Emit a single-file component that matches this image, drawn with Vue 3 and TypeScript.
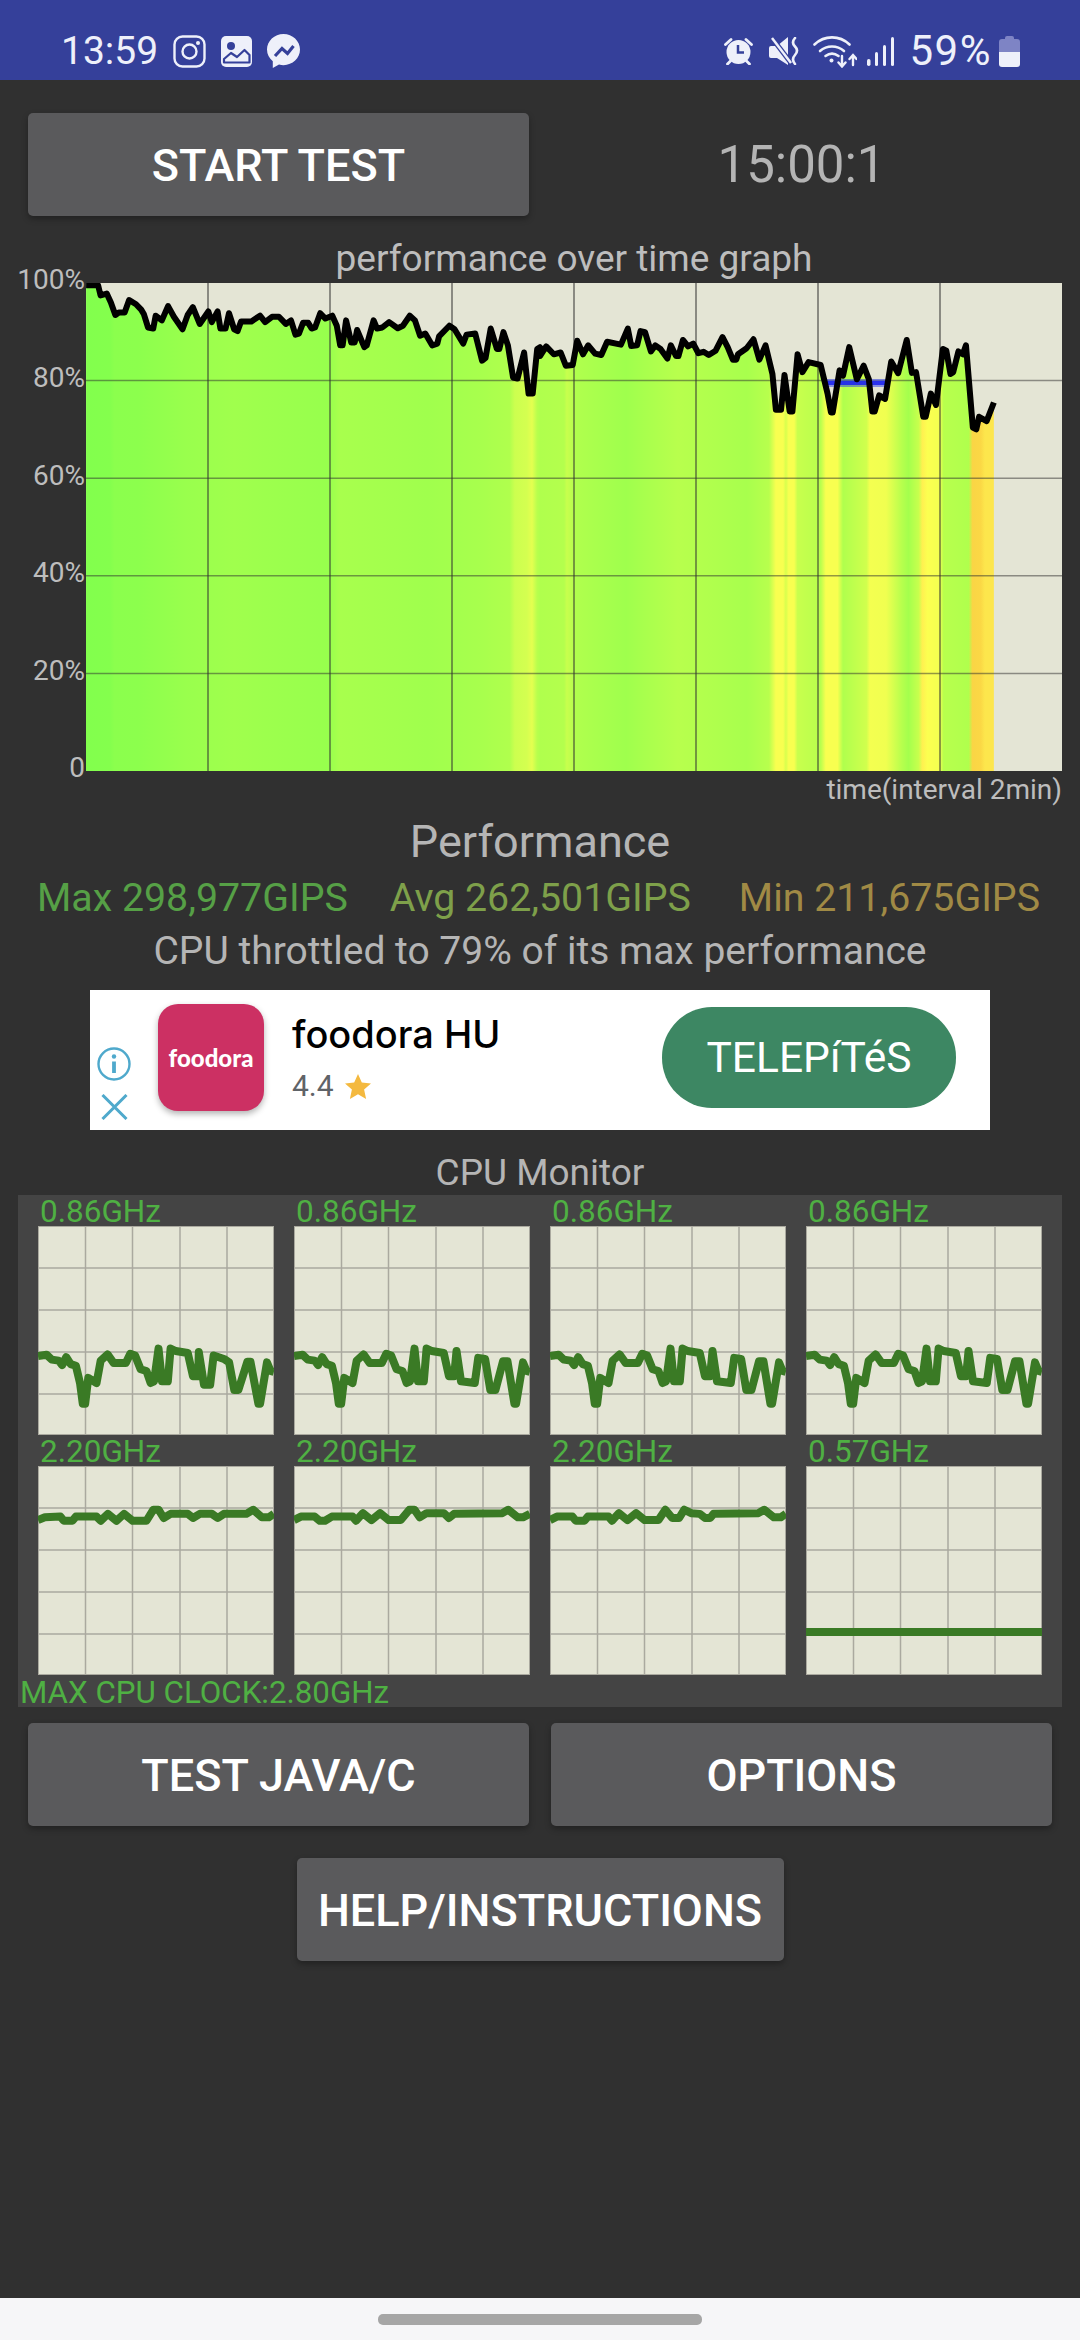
<script setup lang="ts">
type Pt = [number, number]

// trace points were read off the reference, scale them back to plot pixels
const leftX = (x: number) => x / 2.904 - 86
const rightX = (x: number) => x / 2.904 + 454
const chartY = (y: number) => y / 2.8 - 43

const traceLeft: Pt[] = [
  [250, 127], [285, 127], [292, 155], [310, 150], [322, 175], [335, 210], [345, 203], [362, 203], [375, 168], [395, 180],
  [410, 195], [418, 208], [430, 245], [445, 248], [452, 212], [470, 225], [488, 185], [505, 215], [530, 250], [545, 210],
  [560, 188], [580, 235], [605, 200], [615, 230], [632, 200], [640, 248], [655, 248], [665, 205], [680, 250], [690, 255],
  [700, 228], [730, 228], [755, 212], [770, 230], [790, 215], [810, 215], [830, 235], [845, 225], [858, 265], [868, 262],
  [880, 232], [895, 232], [905, 248], [915, 245], [930, 205], [945, 220], [965, 212], [978, 240], [988, 295], [995, 295],
  [1005, 225], [1020, 287], [1030, 287], [1037, 252], [1058, 300], [1065, 295], [1085, 225], [1095, 248], [1110, 245], [1130, 230],
  [1155, 247], [1170, 240], [1190, 212], [1205, 225], [1220, 268], [1235, 262], [1255, 295], [1270, 290], [1275, 270], [1305, 240],
  [1320, 250], [1345, 290], [1355, 265], [1380, 262], [1400, 338], [1410, 330], [1425, 248], [1443, 305], [1450, 305], [1462, 258],
  [1475, 295], [1490, 385], [1503, 388], [1522, 315], [1535, 430], [1547, 430], [1560, 305], [1568, 300]
]
const traceRight: Pt[] = [
  [0, 325], [18, 298], [40, 320], [60, 315], [75, 352], [95, 350], [108, 282], [125, 320], [140, 295], [160, 318],
  [178, 322], [195, 285], [235, 293], [255, 248], [265, 297], [282, 295], [292, 255], [305, 258], [322, 312], [335, 295],
  [350, 305], [370, 332], [380, 295], [395, 325], [402, 325], [415, 280], [430, 298], [445, 290], [460, 317], [475, 313],
  [490, 322], [510, 310], [530, 272], [545, 300], [560, 335], [570, 335], [575, 320], [600, 303], [620, 278], [637, 335],
  [655, 295], [675, 375], [685, 475], [700, 475], [710, 378], [725, 480], [733, 480], [748, 320], [762, 370], [780, 342],
  [815, 350], [835, 430], [845, 483], [850, 483], [870, 365], [880, 380], [898, 300], [920, 390], [940, 352], [955, 390],
  [965, 480], [972, 480], [985, 435], [1002, 445], [1020, 340], [1040, 373], [1065, 280], [1080, 372], [1092, 370], [1113, 495],
  [1120, 495], [1135, 430], [1150, 462], [1170, 305], [1180, 310], [1192, 375], [1200, 370], [1215, 312], [1228, 320], [1237, 295],
  [1257, 525], [1267, 530], [1275, 495], [1297, 507], [1318, 455]
]

const trace: Pt[] = [
  ...traceLeft.map(([x, y]): Pt => [leftX(x), chartY(y)]),
  ...traceRight.map(([x, y]): Pt => [rightX(x), chartY(y)])
]
const tracePoints = trace.map(p => p.join(',')).join(' ')
const lastX = trace[trace.length - 1][0]
const areaPoints = `${tracePoints} ${lastX},488 0,488`

const heatLeft: [number, string][] = [
  [250, '#82ff4d'], [320, '#84ff4d'], [332, '#8bff4d'], [400, '#8cff4d'], [540, '#99ff4d'], [600, '#9cff4d'], [680, '#a0ff4d'],
  [955, '#97ff4d'], [985, '#a8ff4d'], [1240, '#a0ff4d'], [1400, '#a8ff4d'], [1480, '#b0ff4d'], [1495, '#ccff4f'], [1530, '#d4ff50'], [1545, '#e4ff50'], [1560, '#b8ff4d']
]
const heatRight: [number, string][] = [
  [0, '#b0ff4d'], [70, '#b4ff4d'], [78, '#c8ff4d'], [105, '#b0ff4d'], [250, '#9fff4d'], [300, '#a8ff4d'], [400, '#b8ff4d'], [600, '#a8ff4d'],
  [665, '#b8ff4d'], [685, '#f8ff50'], [706, '#f8ff50'], [714, '#d8ff4d'], [722, '#f8ff50'], [738, '#f8ff50'], [748, '#c8ff4d'], [815, '#b8ff4d'],
  [830, '#f8ff50'], [864, '#f8ff50'], [880, '#b0ff4d'], [948, '#d0ff4d'], [958, '#f4ff50'], [1005, '#f0ff50'], [1050, '#b8ff4d'], [1070, '#a4ff4d'],
  [1100, '#c8ff4d'], [1110, '#fff050'], [1125, '#fcff50'], [1160, '#f4ff50'], [1172, '#b8ff4d'], [1245, '#b0ff4d'], [1256, '#fad545'], [1280, '#fbd845'],
  [1292, '#fde64c'], [1322, '#fde64c']
]
const heatStops = [
  ...heatLeft.map(([x, c]) => ({ at: leftX(x) / 976, color: c })),
  ...heatRight.map(([x, c]) => ({ at: rightX(x) / 976, color: c }))
]

const chartCols = [122, 244, 366, 488, 610, 732, 854]
const chartRows = [97.6, 195.2, 292.8, 390.4]
const ticks = [
  { label: '100%', y: 0 }, { label: '80%', y: 97.6 }, { label: '60%', y: 195.2 },
  { label: '40%', y: 292.8 }, { label: '20%', y: 390.4 }, { label: '0', y: 488 }
]

const fastA: Pt[] = [
  [110, 512], [135, 508], [150, 522], [170, 525], [180, 538], [192, 515], [205, 535], [220, 540], [232, 590], [240, 650], [247, 650],
  [256, 575], [280, 590], [292, 525], [312, 507], [330, 532], [365, 532], [378, 505], [392, 510], [408, 550], [425, 555], [437, 590],
  [447, 585], [460, 490], [470, 585], [487, 585], [495, 490], [510, 497], [545, 503], [560, 570], [575, 570], [577, 500], [592, 595],
  [610, 595], [620, 510], [650, 520], [665, 530], [680, 610], [692, 610], [718, 528], [727, 528], [750, 650], [755, 650], [775, 530], [785, 555], [795, 558]
]
const fastB: Pt[] = [
  ...fastA.slice(0, 30),
  [575, 570], [582, 497], [595, 585], [635, 590], [645, 517], [665, 520], [680, 610], [695, 610], [717, 527], [730, 527], [750, 650], [755, 650], [775, 530], [785, 555], [795, 558]
]
const bigA: Pt[] = [
  [110, 988], [130, 980], [175, 978], [185, 990], [210, 990], [220, 978], [280, 978], [292, 990], [313, 970], [338, 990], [360, 970], [385, 990],
  [425, 990], [445, 958], [460, 958], [475, 982], [495, 970], [545, 970], [560, 982], [580, 970], [615, 970], [632, 982], [650, 970], [715, 970],
  [735, 958], [760, 980], [780, 980], [795, 970]
]
const bigB: Pt[] = [
  [110, 988], [130, 978], [170, 978], [185, 990], [200, 990], [220, 978], [280, 978], [290, 990], [310, 968], [335, 988], [360, 968], [385, 988],
  [420, 988], [445, 958], [460, 958], [475, 980], [495, 968], [545, 968], [560, 982], [575, 970], [715, 968], [732, 958], [760, 980], [775, 980], [795, 970]
]
const bigC: Pt[] = [
  [110, 988], [130, 978], [175, 978], [185, 990], [210, 990], [220, 978], [280, 978], [290, 990], [310, 968], [335, 988], [360, 968], [385, 988],
  [425, 988], [445, 958], [465, 982], [485, 982], [500, 958], [520, 968], [545, 970], [560, 982], [575, 982], [585, 970], [715, 968], [732, 958],
  [760, 980], [780, 980], [795, 970]
]

const toPlot = (pts: Pt[], top: number) =>
  pts.map(([x, y]) => `${(x - 110) / 2.904},${(y - top) / 2.904}`).join(' ')

const cores = [
  { clock: '0.86GHz', line: toPlot(fastA, 134) },
  { clock: '0.86GHz', line: toPlot(fastB, 134) },
  { clock: '0.86GHz', line: toPlot(fastB, 134) },
  { clock: '0.86GHz', line: toPlot(fastB, 134) },
  { clock: '2.20GHz', line: toPlot(bigA, 831) },
  { clock: '2.20GHz', line: toPlot(bigB, 831) },
  { clock: '2.20GHz', line: toPlot(bigC, 831) },
  { clock: '0.57GHz', line: '0,166 236,166' }
]
const plotCols = [47.5, 94.5, 142, 189]
const plotRows = [42, 84, 126, 168]
</script>

<template>
  <div class="screen">
    <header class="status">
      <div class="status-left">
        <span class="status-text clock">13:59</span>
        <svg width="33" height="33" viewBox="0 0 33 33" fill="none" stroke="#eef0fa" stroke-width="2.4">
          <rect x="1.5" y="1.5" width="30" height="30" rx="8" />
          <circle cx="16.5" cy="16.5" r="7" />
          <circle cx="25" cy="8" r="2" fill="#eef0fa" stroke="none" />
        </svg>
        <svg width="31" height="31" viewBox="0 0 31 31">
          <rect width="31" height="31" rx="5" fill="#eef0fa" />
          <circle cx="10" cy="10" r="4" fill="#35409a" />
          <path d="M3 26.5V23l7-6 6 4 7.500-7 5 5v7.500z" fill="#eef0fa" stroke="#35409a" stroke-width="2.200" stroke-linejoin="round" />
        </svg>
        <svg width="33" height="34" viewBox="0 0 33 34">
          <path d="M16.500 0C7.400 0 0 7 0 15.600c0 4.700 2.200 8.900 5.800 11.700V34l6.200-3.400c1.400.4 2.900.6 4.500.6 9.100 0 16.500-7 16.500-15.600S25.600 0 16.500 0z" fill="#eef0fa" />
          <path d="M8 22l7-7.500 5.500 5 6-7.500" fill="none" stroke="#35409a" stroke-width="3.200" />
        </svg>
      </div>
      <div class="status-right">
        <svg class="i-alarm" width="29" height="28" viewBox="0 0 29 28">
          <circle cx="14.500" cy="15" r="12" fill="#eef0fa" />
          <path d="M14 8v7.500h6" fill="none" stroke="#35409a" stroke-width="2.500" />
          <path d="M1.500 7.500 7 2.500M27.500 7.500 22 2.500M6.500 24 3.500 27M22.500 24 25.500 27" stroke="#eef0fa" stroke-width="2.800" stroke-linecap="round" />
        </svg>
        <svg class="i-mute" width="30" height="28" viewBox="0 0 30 28">
          <path d="M0 11a2 2 0 0 1 2-2h6L19 0v28L8 21H2a2 2 0 0 1-2-2z" fill="#eef0fa" />
          <path d="M3 1 22 26" stroke="#35409a" stroke-width="5" />
          <path d="M3 1 22 26" stroke="#eef0fa" stroke-width="2.500" />
          <path d="M26 1q-4 4.500 0 8.500t0 8.500q-4 4.500 0 9" fill="none" stroke="#eef0fa" stroke-width="2.600" stroke-linecap="round" />
        </svg>
        <svg class="i-wifi" width="44" height="34" viewBox="0 0 44 34" fill="none" stroke="#eef0fa" stroke-width="2.600" stroke-linecap="round">
          <path d="M1.500 10.500c10-9.500 25-9.500 35 0" />
          <path d="M7 17c7-6 17-6 24 0" />
          <path d="M12.500 22c4-3 9-3 13 0" />
          <circle cx="18.500" cy="26.500" r="2" fill="#eef0fa" stroke="none" />
          <path d="M29 22v10M25.500 28.500 29 32.500l3.500-4M40 31V21.500M36.500 25l3.500-4 3.500 4" stroke-width="2.400" />
        </svg>
        <svg class="i-signal" width="27" height="29" viewBox="0 0 27 29" fill="#eef0fa">
          <rect x="0" y="22" width="3.500" height="7" rx="1.700" />
          <rect x="8" y="15" width="3" height="14" rx="1.500" />
          <rect x="16" y="8" width="3" height="21" rx="1.500" />
          <rect x="24" y="0" width="3" height="29" rx="1.500" />
        </svg>
        <span class="status-text percent">59%</span>
        <svg class="i-battery" width="21" height="31" viewBox="0 0 21 31">
          <path d="M6 3V2a2 2 0 0 1 2-2h5a2 2 0 0 1 2 2v1h3a3 3 0 0 1 3 3v10H0V6a3 3 0 0 1 3-3z" fill="#7e84c5" />
          <path d="M0 16h21v12a3 3 0 0 1-3 3H3a3 3 0 0 1-3-3z" fill="#eef0fa" />
        </svg>
      </div>
    </header>

    <main class="content">
      <section class="top-row">
        <button class="btn">START TEST</button>
        <div class="timer">15:00:1</div>
      </section>

      <div class="graph-title">performance over time graph</div>
      <section class="graph">
        <div class="axis">
          <span v-for="t in ticks" :key="t.label" class="tick" :style="{ top: t.y - 16.6 + 'px' }">{{ t.label }}</span>
        </div>
        <svg class="graph-plot" width="976" height="488" viewBox="0 0 976 488">
          <defs>
            <linearGradient id="heat" gradientUnits="userSpaceOnUse" x1="0" y1="0" x2="976" y2="0">
              <stop v-for="(s, i) in heatStops" :key="i" :offset="s.at" :stop-color="s.color" />
            </linearGradient>
          </defs>
          <rect width="976" height="488" fill="#e4e5d5" />
          <polygon :points="areaPoints" fill="url(#heat)" />
          <line v-for="x in chartCols" :key="'c' + x" :x1="x" :x2="x" y1="0" y2="488" stroke="#303030" stroke-opacity=".5" stroke-width="2" />
          <line v-for="y in chartRows" :key="'r' + y" x1="0" x2="976" :y1="y" :y2="y" stroke="#303030" stroke-opacity=".5" stroke-width="1.500" />
          <rect x="740" y="96" width="60" height="8" fill="#2c3cf0" fill-opacity=".5" />
          <rect x="740" y="98" width="60" height="4" fill="#1a22f0" fill-opacity=".85" />
          <polyline :points="tracePoints" fill="none" stroke="#000" stroke-width="6" stroke-linejoin="round" />
        </svg>
      </section>
      <div class="time-note">time(interval 2min)</div>

      <h2 class="perf-title">Performance</h2>
      <div class="stats">
        <span class="stat-max">Max 298,977GIPS</span>
        <span class="stat-avg">Avg 262,501GIPS</span>
        <span class="stat-min">Min 211,675GIPS</span>
      </div>
      <p class="throttle">CPU throttled to 79% of its max performance</p>

      <aside class="ad">
        <div class="ad-marks">
          <svg width="34" height="34" viewBox="0 0 34 34" fill="none" stroke="#4fa9cc">
            <circle cx="17" cy="17" r="15.500" stroke-width="2.400" />
            <path d="M17 14.500V26" stroke-width="3.800" />
            <circle cx="17" cy="9.500" r="2.200" fill="#4fa9cc" stroke="none" />
          </svg>
          <svg width="27" height="26" viewBox="0 0 27 26" stroke="#4fa9cc" stroke-width="3">
            <path d="M1.500 1 25.500 25M25.500 1 1.500 25" />
          </svg>
        </div>
        <div class="ad-icon">foodora</div>
        <div class="ad-text">
          <div class="ad-name">foodora HU</div>
          <div class="ad-rating">
            <span>4.4</span>
            <svg width="26" height="25" viewBox="0 0 26 25">
              <path d="M13 0l3.800 8.400 9.200 1-6.900 6.200 2 9.400-8.100-4.800L4.900 25l2-9.400L0 9.400l9.200-1z" fill="#f4b93f" />
            </svg>
          </div>
        </div>
        <div class="ad-cta">TELEPíTéS</div>
      </aside>

      <h3 class="cpu-title">CPU Monitor</h3>
      <section class="cpu-panel">
        <div class="cores">
          <div v-for="(core, i) in cores" :key="i" class="core">
            <div class="core-clock">{{ core.clock }}</div>
            <svg class="core-plot" width="236" height="209" viewBox="0 0 236 209">
              <rect x=".5" y=".5" width="235" height="208" fill="#e4e5d5" stroke="#aaa99f" />
              <line v-for="x in plotCols" :key="'x' + x" :x1="x" :x2="x" y1="0" y2="209" stroke="#aaa99f" stroke-width="1.500" />
              <line v-for="y in plotRows" :key="'y' + y" x1="0" x2="236" :y1="y" :y2="y" stroke="#aaa99f" stroke-width="1.500" />
              <polyline :points="core.line" fill="none" stroke="#3a7a25" stroke-width="8" stroke-linejoin="round" />
            </svg>
          </div>
        </div>
        <div class="max-clock">MAX CPU CLOCK:2.80GHz</div>
      </section>

      <section class="actions">
        <button class="btn">TEST JAVA/C</button>
        <button class="btn">OPTIONS</button>
      </section>
      <section class="help-row">
        <button class="btn help">HELP/INSTRUCTIONS</button>
      </section>
    </main>

    <footer class="nav">
      <span class="nav-pill"></span>
    </footer>
  </div>
</template>

<style>
html, body {
  margin: 0;
  background: #303030;
}
</style>

<style scoped>
.screen {
  width: 1080px;
  height: 2340px;
  display: flex;
  flex-direction: column;
  background: #303030;
  font-family: Roboto, "Noto Sans", sans-serif;
  overflow: hidden;
}

.status {
  height: 80px;
  box-sizing: border-box;
  padding: 33px 60px 11px 61px;
  background: #35409a;
  display: flex;
  justify-content: space-between;
  align-items: center;
}
.status-left,
.status-right {
  display: flex;
  align-items: center;
}
.status-text {
  color: #eef0fa;
  font-size: 39px;
  line-height: 36px;
}
.status-left { gap: 15px; }
.i-alarm { margin-right: 16px; }
.i-mute { margin-right: 14px; }
.i-wifi { margin-right: 10px; }
.i-signal { margin-right: 16px; }
.percent { font-size: 42px; letter-spacing: 1.5px; margin-right: 7px; }

.content {
  flex: 1;
  display: flex;
  flex-direction: column;
}

.btn {
  height: 103px;
  border: 0;
  border-radius: 5px;
  padding: 2px 0 0;
  background: #5a5a5c;
  box-shadow: 0 3px 6px rgba(0, 0, 0, .3);
  color: #fff;
  font-family: inherit;
  font-size: 45px;
  font-weight: 500;
}

.top-row {
  display: grid;
  grid-template-columns: 501px 501px;
  column-gap: 22px;
  margin: 33px 28px 0;
  align-items: center;
}
.timer {
  text-align: center;
  color: #b4b4b4;
  font-size: 51px;
  line-height: 60px;
}

.graph-title {
  margin: 22px 18px 3px 86px;
  text-align: center;
  color: #bdbdbd;
  font-size: 37px;
  line-height: 42px;
}
.graph {
  display: flex;
  height: 488px;
}
.axis {
  position: relative;
  width: 86px;
}
.tick {
  position: absolute;
  right: 1px;
  color: #bdbdbd;
  font-size: 28px;
  line-height: 28px;
}
.graph-plot { display: block; }
.time-note {
  margin-top: 2px;
  padding-right: 18px;
  text-align: right;
  color: #bdbdbd;
  font-size: 28px;
  line-height: 34px;
}

.perf-title {
  margin: 10px 0 0;
  text-align: center;
  color: #b5b5b5;
  font-size: 45px;
  font-weight: 400;
  line-height: 50px;
}
.stats {
  display: flex;
  justify-content: space-between;
  margin-top: 9px;
  padding: 0 40px 0 37px;
  font-size: 39.3px;
  line-height: 44px;
}
.stat-max { color: #56a046; }
.stat-avg { color: #7ea04a; margin-right: 6px; }
.stat-min { color: #a08a45; }
.throttle {
  margin: 10px 0 0;
  text-align: center;
  color: #b5b5b5;
  font-size: 39px;
  line-height: 42px;
}

.ad {
  width: 900px;
  height: 140px;
  margin: 18px 0 0 90px;
  background: #fff;
  display: flex;
}
.ad-marks {
  width: 48px;
  padding-bottom: 10px;
  box-sizing: border-box;
  display: flex;
  flex-direction: column;
  justify-content: flex-end;
  align-items: center;
  gap: 13px;
}
.ad-icon {
  width: 106px;
  height: 107px;
  margin: 14px 0 0 20px;
  border-radius: 20px;
  background: #cc3063;
  box-shadow: 0 3px 6px rgba(0, 0, 0, .3);
  color: #fff;
  font-family: Lato, sans-serif;
  font-size: 24px;
  font-weight: 900;
  line-height: 107px;
  text-align: center;
}
.ad-text { margin: 19px 0 0 28px; }
.ad-name {
  color: #000;
  font-family: Inter, sans-serif;
  font-size: 38px;
  font-weight: 500;
  line-height: 50px;
}
.ad-rating {
  display: flex;
  align-items: center;
  gap: 11px;
  margin-top: 9px;
  color: #5f6368;
  font-size: 30px;
  line-height: 36px;
}
.ad-cta {
  width: 294px;
  height: 101px;
  margin: 17px 34px 0 auto;
  border-radius: 50px;
  background: #3d8763;
  color: #fff;
  font-size: 42.500px;
  line-height: 101px;
  text-align: center;
}

.cpu-title {
  margin: 23px 0 2px;
  text-align: center;
  color: #b5b5b5;
  font-size: 37px;
  font-weight: 400;
  line-height: 40px;
}
.cpu-panel {
  width: 1044px;
  height: 512px;
  margin-left: 18px;
  background: #444;
}
.cores {
  display: grid;
  grid-template-columns: repeat(4, 236px);
  column-gap: 20px;
  padding: 0 20px;
}
.core-clock {
  height: 31px;
  padding-left: 2px;
  color: #4fb043;
  font-size: 31.500px;
  line-height: 33px;
}
.core-plot { display: block; }
.max-clock {
  height: 32px;
  padding-left: 2px;
  color: #4fb043;
  font-size: 31.300px;
  line-height: 35px;
}

.actions {
  display: grid;
  grid-template-columns: 501px 501px;
  column-gap: 22px;
  margin: 16px 28px 0;
}
.help-row {
  display: flex;
  justify-content: center;
  margin-top: 32px;
}
.help { width: 487px; }

.nav {
  height: 42px;
  background: #f6f6f8;
  display: flex;
  justify-content: center;
  padding-top: 16px;
  box-sizing: border-box;
}
.nav-pill {
  width: 324px;
  height: 11px;
  border-radius: 5px;
  background: #a6a6a6;
}
</style>
